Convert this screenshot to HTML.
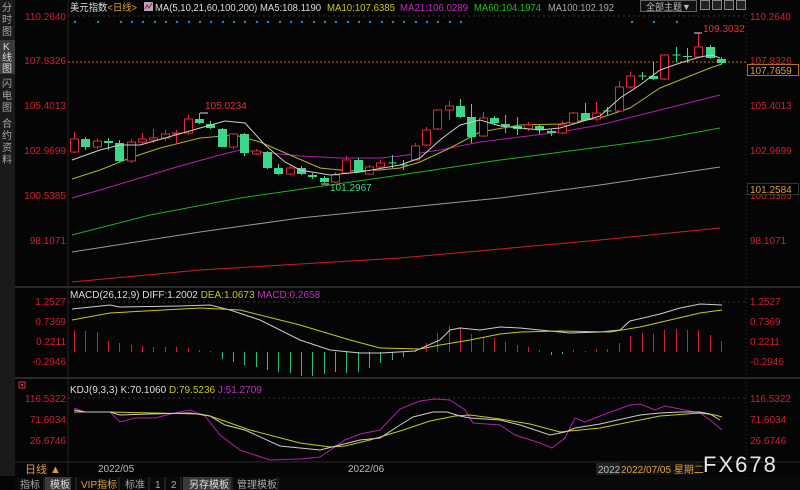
<!DOCTYPE html>
<html><head><meta charset="utf-8"><style>
body{margin:0;background:#000;width:800px;height:490px;overflow:hidden;font-family:"Liberation Sans","Noto Sans CJK SC",sans-serif;}
svg{position:absolute;left:0;top:0}
</style></head><body>
<svg id="s" width="800" height="490" xmlns="http://www.w3.org/2000/svg" font-family="Liberation Sans, Noto Sans CJK SC, sans-serif">
<rect width="800" height="490" fill="#050505"/>
<rect x="0" y="0" width="15" height="476" fill="#1a1a1a"/>
<rect x="0" y="40" width="15" height="34" fill="#3a3a3a"/>
<g fill="#a8a8a8" font-size="10">
<text x="2" y="11">分</text><text x="2" y="23">时</text><text x="2" y="35">图</text>
<text x="3" y="50" fill="#ddd">K</text><text x="2" y="61" fill="#ddd">线</text><text x="2" y="72" fill="#ddd">图</text>
<text x="2" y="87">闪</text><text x="2" y="99">电</text><text x="2" y="111">图</text>
<text x="2" y="127">合</text><text x="2" y="139">约</text><text x="2" y="151">资</text><text x="2" y="163">料</text>
</g>
<line x1="68" y1="0" x2="68" y2="476" stroke="#222"/>
<line x1="746" y1="14" x2="746" y2="476" stroke="#333" stroke-dasharray="1,3"/>
<line x1="15" y1="287" x2="800" y2="287" stroke="#2a2a2a" stroke-width="2"/>
<line x1="15" y1="378" x2="800" y2="378" stroke="#2a2a2a" stroke-width="2"/>
<line x1="15" y1="462" x2="800" y2="462" stroke="#2a2a2a"/>
<line x1="68" y1="16" x2="746" y2="16" stroke="#333" stroke-dasharray="2,3"/>
<line x1="68" y1="302" x2="746" y2="302" stroke="#333" stroke-dasharray="2,3"/>
<line x1="68" y1="398" x2="746" y2="398" stroke="#333" stroke-dasharray="2,3"/>
<text x="70" y="11" font-size="10" fill="#ddd" textLength="67" lengthAdjust="spacingAndGlyphs">美元指数<tspan fill="#e0a040">&lt;日线&gt;</tspan></text>
<rect x="144" y="2" width="9" height="9" fill="#aab" /><path d="M145 9 L147 5 L149 8 L152 3" stroke="#c03" fill="none"/>
<text x="155" y="11" font-size="10" fill="#ddd" textLength="166" lengthAdjust="spacingAndGlyphs">MA(5,10,21,60,100,200) MA5:108.1190</text>
<text x="327" y="11" font-size="10" fill="#c8c820" textLength="68" lengthAdjust="spacingAndGlyphs">MA10:107.6385</text>
<text x="400" y="11" font-size="10" fill="#c030c0" textLength="68" lengthAdjust="spacingAndGlyphs">MA21:106.0289</text>
<text x="474" y="11" font-size="10" fill="#20c020" textLength="67" lengthAdjust="spacingAndGlyphs">MA60:104.1974</text>
<text x="548" y="11" font-size="10" fill="#aaa" textLength="66" lengthAdjust="spacingAndGlyphs">MA100:102.192</text>
<rect x="640.5" y="0.5" width="56" height="11" fill="#111" stroke="#666"/>
<text x="646" y="10" font-size="9" fill="#bbb">全部主题▼</text>
<g stroke="#888" fill="#222"><rect x="700.5" y="0.5" width="9" height="9"/><rect x="712.5" y="0.5" width="9" height="9"/><rect x="724.5" y="0.5" width="9" height="9"/><rect x="736.5" y="0.5" width="9" height="9"/></g>
<g font-size="10" fill="#d02030" text-anchor="end">
<text x="66" y="20">110.2640</text><text x="66" y="64">107.8326</text><text x="66" y="109">105.4013</text><text x="66" y="154">102.9699</text><text x="66" y="199">100.5385</text><text x="66" y="244">98.1071</text>
<text x="66" y="305">1.2527</text><text x="66" y="325">0.7369</text><text x="66" y="345">0.2211</text><text x="66" y="365">-0.2946</text>
<text x="66" y="402">116.5322</text><text x="66" y="423">71.6034</text><text x="66" y="444">26.6746</text>
</g>
<g font-size="10" fill="#d02030">
<text x="750" y="20">110.2640</text><text x="750" y="64">107.8326</text><text x="750" y="109">105.4013</text><text x="750" y="154">102.9699</text><text x="750" y="199">100.5385</text><text x="750" y="244">98.1071</text>
<text x="750" y="305">1.2527</text><text x="750" y="325">0.7369</text><text x="750" y="345">0.2211</text><text x="750" y="365">-0.2946</text>
<text x="750" y="402">116.5322</text><text x="750" y="423">71.6034</text><text x="750" y="444">26.6746</text>
</g>
<rect x="747.5" y="64.5" width="51" height="11" fill="#000" stroke="#b07020"/>
<text x="750" y="74" font-size="10" fill="#e0a040">107.7659</text>
<rect x="747.5" y="183.5" width="51" height="11" fill="#000" stroke="#333"/>
<text x="750" y="193" font-size="10" fill="#e0a040">101.2584</text>
<line x1="68" y1="62" x2="746" y2="62" stroke="#c07020" stroke-dasharray="2,2"/>
<g id="dots" fill="#1a8ad0"></g>
<g id="ma" fill="none" stroke-width="1">
<polyline stroke="#cc2020" points="72,282 200,270 400,258 600,240 720,228"/>
<polyline stroke="#999" points="72,252 200,232 300,218 400,208 500,198 600,185 720,167"/>
<polyline stroke="#20b020" points="72,235 150,215 240,198 330,185 400,175 500,160 600,147 660,139 720,128"/>
<polyline stroke="#b020b0" points="72,198 100,190 140,178 180,166 220,155 240,150 260,152 300,156 340,158 380,158 400,156 440,150 480,142 520,137 560,132 600,125 640,115 680,105 720,95"/>
<polyline stroke="#b8b020" points="72,179 100,170 130,158 160,148 200,138 235,135 260,142 290,155 320,168 350,171 380,170 400,168 420,162 450,148 480,132 520,125 560,124 600,118 630,108 660,88 690,76 710,68 722,64"/>
</g>
<g id="c"></g>
<polyline fill="none" stroke="#ccc" points="72,160 100,150 120,145 140,145 165,138 200,128 225,121 245,123 265,145 285,162 300,170 330,175 360,172 400,165 420,158 440,140 460,125 480,120 500,126 540,130 560,128 600,116 620,98 640,85 660,70 680,63 700,57 712,55 720,58"/>
<text x="205" y="109" font-size="10" fill="#e03040">105.0234</text>
<text x="330" y="191" font-size="10" fill="#3ed68a">101.2967</text>
<text x="703" y="32" font-size="10" fill="#e03040">109.3032</text>
<text x="70" y="298" font-size="10" fill="#ddd">MACD(26,12,9) DIFF:1.2002 <tspan fill="#c8c820">DEA:1.0673</tspan> <tspan fill="#c030c0">MACD:0.2658</tspan></text>
<g id="m"></g>
<polyline fill="none" stroke="#ccc" points="72,309 110,305 120,307 180,306 210,305 230,310 260,320 300,340 330,350 360,353 380,353 415,351 440,340 450,330 460,328 480,330 500,327 520,328 540,330 570,333 600,332 620,330 630,321 660,314 680,308 700,304 722,305"/>
<polyline fill="none" stroke="#c8c820" points="72,320 110,313 200,308 240,310 300,325 350,340 380,348 420,349 440,345 470,340 500,334 520,332 560,331 610,332 640,327 670,320 700,313 722,310"/>
<rect x="19" y="382" width="6" height="6" fill="none" stroke="#e03040"/><rect x="21" y="384" width="2" height="2" fill="#e03040"/>
<text x="70" y="393" font-size="10" fill="#ddd">KDJ(9,3,3) K:70.1060 <tspan fill="#c8c820">D:79.5236</tspan> <tspan fill="#c030c0">J:51.2709</tspan></text>
<polyline fill="none" stroke="#b020b0" points="74,408 85,412 110,412 120,422 135,418 155,418 175,413 190,410 205,416 220,435 240,450 270,460 300,459 320,457 345,440 360,434 380,430 400,409 420,401 435,399 450,400 465,410 473,423 500,425 515,435 540,443 552,448 565,438 575,418 585,422 600,416 630,405 640,404 655,410 665,406 690,411 700,413 710,420 722,430"/>
<polyline fill="none" stroke="#c8c820" points="74,412 110,412 200,414 210,416 250,430 300,443 330,447 345,446 370,440 400,431 430,421 455,416 470,415 500,419 530,424 560,432 580,430 600,428 640,420 660,416 700,413 715,415 722,417"/>
<polyline fill="none" stroke="#ccc" points="74,410 85,412 110,412 120,415 150,414 190,413 210,416 225,425 245,430 280,446 300,448 320,450 340,445 360,440 380,438 400,425 413,417 433,412 447,412 460,416 470,418 500,420 520,425 550,435 565,432 575,428 600,424 640,415 660,413 680,412 700,412 710,414 720,420"/>
<text x="25" y="473" font-size="11" fill="#e0a040">日线 ▲</text>
<text x="98" y="472" font-size="10" fill="#bbb">2022/05</text>
<text x="348" y="472" font-size="10" fill="#bbb">2022/06</text>
<rect x="596" y="463" width="24" height="12" fill="#222"/>
<text x="598" y="473" font-size="10" fill="#bbb">2022</text>
<rect x="620" y="463" width="80" height="12" fill="#111"/>
<text x="621" y="473" font-size="10" fill="#e0a040">2022/07/05 星期二</text>
<text x="703" y="472" font-size="22" fill="#e8e8e8" letter-spacing="2">FX678</text>
<rect x="15" y="477" width="785" height="13" fill="#0a0a0a"/>
<g font-size="10">
<rect x="45" y="477" width="26" height="13" fill="#3a3a3a"/>
<rect x="183" y="477" width="48" height="13" fill="#3a3a3a"/>
<text x="20" y="488" fill="#aaa">指标</text>
<text x="50" y="488" fill="#ddd">模板</text>
<text x="81" y="488" fill="#e0a040">VIP指标</text>
<text x="125" y="488" fill="#aaa">标准</text>
<text x="155" y="488" fill="#aaa">1</text>
<text x="171" y="488" fill="#aaa">2</text>
<text x="189" y="488" fill="#ddd">另存模板</text>
<text x="237" y="488" fill="#aaa">管理模板</text>
</g>
<g stroke="#333"><line x1="44" y1="477" x2="44" y2="490"/><line x1="76" y1="477" x2="76" y2="490"/><line x1="119" y1="477" x2="119" y2="490"/><line x1="149" y1="477" x2="149" y2="490"/><line x1="165" y1="477" x2="165" y2="490"/><line x1="181" y1="477" x2="181" y2="490"/><line x1="232" y1="477" x2="232" y2="490"/><line x1="278" y1="477" x2="278" y2="490"/></g>
</svg>
<script>
var NS="http://www.w3.org/2000/svg";
function el(p,t,a){var e=document.createElementNS(NS,t);for(var k in a)e.setAttribute(k,a[k]);document.getElementById(p).appendChild(e);}
var dx=[75,98,121,132,143,155,166,177,189,200,211,223,234,245,257,268,280,291,302,314,325,336,348,359,370,382,393,404,416,427,438,450,461,632,654,677];
dx.forEach(function(x){el("dots","circle",{cx:x,cy:22,r:1.2});});
var C=[["r",139,152,132,153],["g",139,147,137,150],["r",141,147,138,149],["g",141,143,138,150],["g",143,161,140,162],["r",142,161,139,163],["r",139,142,133,145],["r",138,140,129,143],["r",134,138,130,141],["r",133,134,130,143],["r",119,133,115,135],["g",119,123,113,124],["g",124,128,121,129],["g",129,147,128,147],["r",134,147,133,149],["g",134,153,133,156],["r",151,154,149,155],["g",152,168,151,169],["g",168,174,164,175],["r",168,174,166,175],["g",168,174,166,175],["g",175,177,173,179],["g",178,182,176,183],["r",175,182,172,183],["r",160,173,156,174],["g",160,172,158,173],["r",167,174,165,175],["r",163,167,160,168],["c",163,164,155,168],["c",165,166,160,170],["r",146,160,143,160],["r",130,145,127,146],["r",110,129,109,130],["r",106,110,101,120],["g",106,117,99,118],["g",117,137,104,143],["r",118,136,112,137],["g",118,123,116,125],["g",124,126,115,133],["g",126,129,117,135],["r",125,129,122,131],["g",126,130,125,134],["g",131,133,129,136],["r",125,133,121,134],["r",113,123,112,124],["g",113,120,103,121],["r",113,119,102,121],["c",111,112,107,115],["r",87,111,81,112],["r",76,87,72,89],["c",76,77,72,80],["g",76,79,62,80],["r",55,79,54,80],["c",55,56,47,62],["g",56,57,48,63],["r",47,57,33,57],["g",47,58,45,59],["g",59,63,57,64]];
C.forEach(function(d,i){var x=Math.round(74+11.35*i)+0.5,col=d[0]=="r"?"#e02840":"#3ed68a";
el("c","line",{x1:x,y1:d[3],x2:x,y2:d[4],stroke:col});
if(d[0]=="c"){el("c","line",{x1:x-4,y1:d[1],x2:x+4,y2:d[1],stroke:col});return;}
if(d[0]=="r")el("c","rect",{x:x-4,y:d[1],width:8,height:Math.max(1,d[2]-d[1]),fill:"#000",stroke:col});
else el("c","rect",{x:x-4.5,y:d[1],width:9,height:Math.max(1,d[2]-d[1]),fill:col});});
el("c","line",{x1:694,y1:33,x2:702,y2:33,stroke:"#ddd"});
el("c","line",{x1:200,y1:113,x2:208,y2:113,stroke:"#ddd"});
el("c","line",{x1:321,y1:184,x2:329,y2:184,stroke:"#ddd"});
var M=[330,331,332,341,343,345,346,347,347,347,348,350,351,359,362,365,367,370,372,373,376,376,374,372,373,372,368,363,360,357,350,343,333,326,327,334,337,338,342,345,347,350,355,354,350,351,349,349,343,336,333,334,330,329,330,330,335,341];
M.forEach(function(v,i){var x=Math.round(74+11.35*i)+0.5;var col=v<352?"#d02038":"#2ec07a";el("m","line",{x1:x,y1:352,x2:x,y2:v,stroke:col});});
</script>
</body></html>
